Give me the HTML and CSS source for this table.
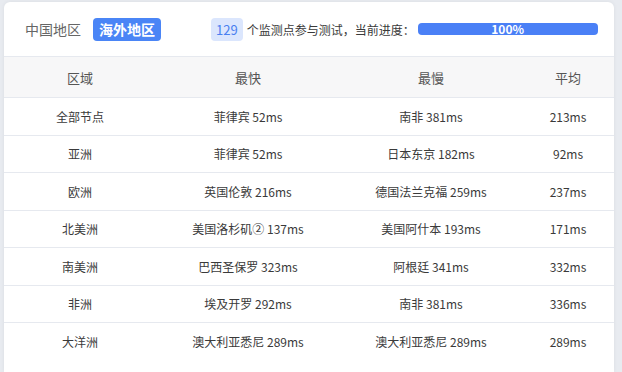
FILE: index.html
```html
<!DOCTYPE html>
<html lang="zh-CN">
<head>
<meta charset="utf-8">
<title>监测</title>
<link rel="stylesheet" href="styles.css">
</head>
<body>
<div class="card">
  <div class="topbar">
    <span class="tab">中国地区</span>
    <span class="tab active">海外地区</span>
    <span class="count">129</span>
    <span class="info">个监测点参与测试，当前进度：</span>
    <div class="progress"><span>100%</span></div>
  </div>
  <table class="grid">
    <colgroup>
      <col class="c1"><col class="c2"><col class="c3"><col class="c4">
    </colgroup>
    <thead>
      <tr><th>区域</th><th>最快</th><th>最慢</th><th>平均</th></tr>
    </thead>
    <tbody>
      <tr><td>全部节点</td><td>菲律宾 52ms</td><td>南非 381ms</td><td>213ms</td></tr>
      <tr><td>亚洲</td><td>菲律宾 52ms</td><td>日本东京 182ms</td><td>92ms</td></tr>
      <tr><td>欧洲</td><td>英国伦敦 216ms</td><td>德国法兰克福 259ms</td><td>237ms</td></tr>
      <tr><td>北美洲</td><td>美国洛杉矶② 137ms</td><td>美国阿什本 193ms</td><td>171ms</td></tr>
      <tr><td>南美洲</td><td>巴西圣保罗 323ms</td><td>阿根廷 341ms</td><td>332ms</td></tr>
      <tr><td>非洲</td><td>埃及开罗 292ms</td><td>南非 381ms</td><td>336ms</td></tr>
      <tr><td>大洋洲</td><td>澳大利亚悉尼 289ms</td><td>澳大利亚悉尼 289ms</td><td>289ms</td></tr>
    </tbody>
  </table>
</div>
</body>
</html>
```

FILE: styles.css
```css
html, body {
  margin: 0;
  padding: 0;
  height: 100%;
  overflow: hidden;
}
body {
  background: #e8ebf0;
  font-family: "Noto Sans CJK SC", "Noto Sans", sans-serif;
  color: #333;
}
.card {
  margin: 2px 8px 0 4px;
  background: #fff;
  border-radius: 6px 6px 0 0;
  box-shadow: 0 0 4px rgba(0, 0, 0, 0.06);
  height: 370px;
  overflow: hidden;
}
.topbar {
  height: 54px;
  border-bottom: 1px solid #e6e9ef;
  display: flex;
  align-items: center;
  padding-left: 21px;
}
.tab {
  font-size: 14px;
  line-height: 23px;
  color: #666;
}
.tab.active {
  margin-left: 12px;
  background: #4a85f6;
  color: #fff;
  padding: 0 6px;
  border-radius: 4px;
  font-weight: bold;
}
.count {
  margin-left: 50px;
  background: #dbe6fd;
  color: #4a80f0;
  font-size: 13px;
  line-height: 23px;
  padding: 0 5px;
  border-radius: 4px;
  min-width: 21px;
  text-align: center;
}
.info {
  margin-left: 4px;
  font-size: 12px;
  color: #3a3a3a;
  line-height: 23px;
}
.progress {
  margin-left: 3px;
  width: 180px;
  height: 12px;
  background: #4a80f6;
  border-radius: 4px;
  display: flex;
  align-items: center;
  justify-content: center;
}
.progress span {
  color: #fff;
  font-size: 12px;
  font-weight: bold;
  line-height: 12px;
}
.grid {
  width: 100%;
  border-collapse: collapse;
  table-layout: fixed;
}
.c1 { width: 152px; }
.c2 { width: 184px; }
.c3 { width: 182px; }
.c4 { width: 92px; }
.grid th {
  background: #f7f7f8;
  font-weight: normal;
  font-size: 13px;
  color: #555;
  height: 40px;
  padding: 0;
  border-bottom: 1px solid #e6e9ef;
}
.grid td {
  font-size: 12px;
  color: #3a3a3a;
  text-align: center;
  height: 36.5px;
  padding: 0;
  border-bottom: 1px solid #e6e9ef;
}
.grid tbody tr:last-child td {
  border-bottom: none;
}
```
